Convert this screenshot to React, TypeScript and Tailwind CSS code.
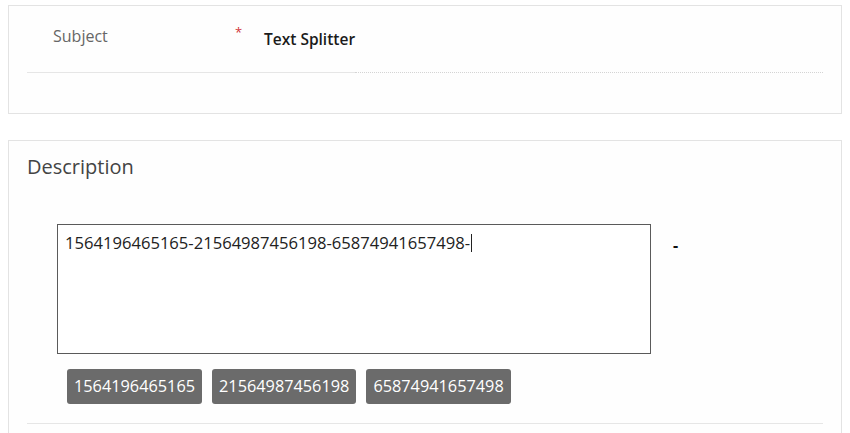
import React from 'react';

const parts = ['1564196465165', '21564987456198', '65874941657498'];

function SubjectCard() {
  return (
    <div className="mx-2 mt-[5px] h-[109px] border border-[#e3e3e3] bg-[#fefefe] px-[18px]">
      <div className="flex h-[66px] items-center">
        <div className="w-[208px] pl-[26px] pb-[7px] text-[16px] text-[#666666]">Subject</div>
        <div className="w-[29px] pb-[12px] text-[13px] text-[#d13438]">*</div>
        <div className="pt-[1px] text-[15.5px] font-semibold text-[#1b1b1b]">Text Splitter</div>
      </div>
      <div className="flex">
        <div className="w-[328px] border-t border-[#e6e6e6]" />
        <div className="flex-1 border-t border-dotted border-[#d4d4d4]" />
      </div>
    </div>
  );
}

function DescriptionCard() {
  const value = parts.join('-') + '-';
  return (
    <div className="mx-2 mt-[26px] h-[300px] border border-[#e3e3e3] bg-[#fefefe] px-[18px]">
      <div className="pt-[11px] text-[20px] text-[#444444]">Description</div>
      <div className="mt-[42px] flex items-start pl-[30px]">
        <div className="h-[130px] w-[594px] border border-[#5a5a5a] bg-white px-[7px] pt-[5px] text-[16.6px] leading-[26px] text-[#222222]">
          {value}
          <span className="ml-[1px] inline-block h-[18px] w-[1px] translate-y-[3px] bg-[#222222]" />
        </div>
        <div className="ml-[22px] pt-[9px] text-[16px] font-bold text-[#111111]">-</div>
      </div>
      <div className="mt-[15px] flex gap-[10px] pl-[40px]">
        {parts.map((p) => (
          <span
            key={p}
            className="flex h-[35px] items-center rounded-[3px] bg-[#6b6b6b] px-[7px] text-[16.3px] text-white"
          >
            {p}
          </span>
        ))}
      </div>
      <div className="mt-[19px] border-t border-[#e6e6e6]" />
    </div>
  );
}

export default function App() {
  return (
    <div className="h-[433px] w-[850px] overflow-hidden bg-white font-['Open_Sans',sans-serif]">
      <SubjectCard />
      <DescriptionCard />
    </div>
  );
}
